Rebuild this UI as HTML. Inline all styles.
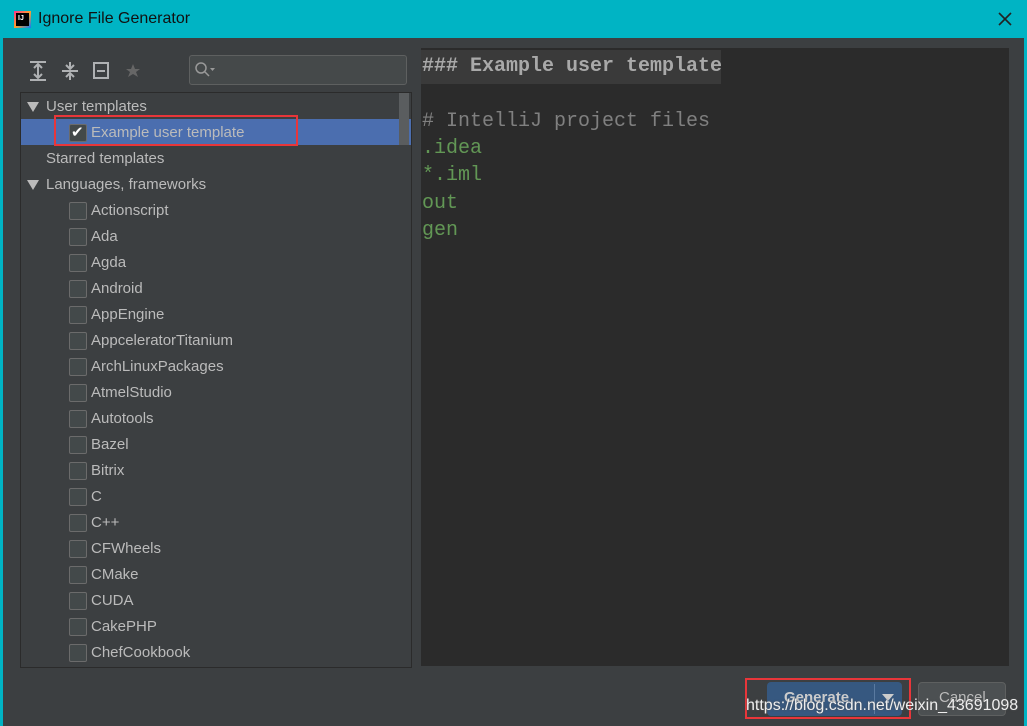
<!DOCTYPE html><html><head><style>
body{margin:0;width:1027px;height:726px;overflow:hidden;background:#3c3f41;font-family:"Liberation Sans",sans-serif;position:relative}
.a{position:absolute}
.row{position:absolute;left:0;height:26px;line-height:28px;font-size:15px;color:#bbbbbb;white-space:nowrap}
.cb{position:absolute;left:48px;top:5px;width:16px;height:16px;border:1px solid #6b6b6b;background:#43494a;border-radius:2px}
.tri{position:absolute;left:6px;top:9px;width:0;height:0;border-left:6px solid transparent;border-right:6px solid transparent;border-top:10px solid #bbb}
.mono{position:absolute;left:422px;font-family:"Liberation Mono",monospace;font-size:20px;line-height:27.3px;white-space:pre}
</style></head><body>
<div class="a" style="left:0;top:0;width:1027px;height:38px;background:#00b4c4"></div>
<div class="a" style="left:0;top:0;width:3px;height:726px;background:#00b4c4"></div>
<div class="a" style="left:1024px;top:0;width:3px;height:726px;background:#00b4c4"></div>
<div class="a" style="left:14px;top:11px;width:17px;height:17px;background:linear-gradient(135deg,#fc318c,#fe9f2b 50%,#087cfa)"></div>
<div class="a" style="left:16px;top:13px;width:13px;height:13px;background:#000"></div>
<div class="a" style="left:18px;top:15px;color:#fff;font-size:7px;font-weight:bold">IJ</div>
<div class="a" style="left:38px;top:10px;font-size:16px;color:#111">Ignore File Generator</div>
<svg class="a" style="left:998px;top:12px" width="14" height="14" stroke="#222" stroke-width="1.6"><path d="M1 1l12 12M13 1L1 13"/></svg>
<!-- toolbar -->
<svg class="a" style="left:28px;top:60px" width="120" height="22" fill="none" stroke="#afb1b3" stroke-width="2">
<path d="M2 2h16M2 20h16M10 5v12M6 8l4-4 4 4M6 14l4 4 4-4"/>
<path d="M34 11h16M42 2v6M38 5l4 4 4-4M42 20v-6M38 17l4-4 4 4"/>
<rect x="66" y="3" width="14" height="15"/><path d="M69 11h8"/>
<path d="M105 4l2 5h5l-4 3 2 5-5-3-5 3 2-5-4-3h5z" fill="#666" stroke="none"/>
</svg>
<div class="a" style="left:189px;top:55px;width:216px;height:28px;border:1px solid #5e6060;border-radius:3px;background:#45494a"></div>
<svg class="a" style="left:194px;top:61px" width="24" height="18" fill="none" stroke="#999" stroke-width="1.5"><circle cx="7" cy="7" r="5"/><path d="M11 11l4 4"/><path d="M16 7h5l-2.5 3z" fill="#999" stroke="none"/></svg>
<!-- tree -->
<div class="a" style="left:20px;top:92px;width:390px;height:574px;border:1px solid #2b2b2b;overflow:hidden">
<div class="a" style="left:0;top:26px;width:390px;height:26px;background:#4b6eaf"></div>
<div class="a" style="left:378px;top:0;width:10px;height:52px;background:#5a5d5f"></div>
<div class="row" style="top:0"><div class="tri"></div><span style="position:absolute;left:25px">User templates</span></div>
<div class="row" style="top:26px"><div class="cb" style="background:#43494a"></div><span style="position:absolute;left:50px;top:0;color:#fff;font-size:15px">✔</span><span style="position:absolute;left:70px">Example user template</span></div>
<div class="row" style="top:52px"><span style="position:absolute;left:25px">Starred templates</span></div>
<div class="row" style="top:78px"><div class="tri"></div><span style="position:absolute;left:25px">Languages, frameworks</span></div>
<div id="list"></div>
</div>
<div class="a" style="left:54px;top:115px;width:244px;height:31px;border:2px solid #e8363a;box-sizing:border-box"></div>
<!-- editor -->
<div class="a" style="left:421px;top:48px;width:588px;height:618px;background:#2b2b2b"></div>
<div class="a" style="left:421px;top:50px;width:300px;height:34px;background:#3a3a3a"></div>
<div class="mono" style="top:53px;color:#a9a9a9;font-weight:bold">### Example user template</div>
<div class="mono" style="top:108px;color:#808080"># IntelliJ project files</div>
<div class="mono" style="top:135px;color:#629755">.idea
*.iml
out
gen</div>
<!-- buttons -->
<div class="a" style="left:767px;top:682px;width:135px;height:34px;background:#365880;border-radius:4px"></div>
<div class="a" style="left:874px;top:684px;width:1px;height:30px;background:#5a7aa0"></div>
<div class="a" style="left:784px;top:689px;font-size:15px;font-weight:bold;color:#ccc">Generate</div>
<div class="a" style="left:882px;top:694px;width:0;height:0;border-left:6px solid transparent;border-right:6px solid transparent;border-top:7px solid #ccc"></div>
<div class="a" style="left:918px;top:682px;width:88px;height:34px;background:#4c5052;border:1px solid #5e6060;border-radius:4px;box-sizing:border-box"></div>
<div class="a" style="left:939px;top:689px;font-size:15px;color:#bbb">Cancel</div>
<div class="a" style="left:745px;top:678px;width:166px;height:41px;border:2px solid #e8363a;box-sizing:border-box"></div>
<div class="a" style="left:746px;top:697px;font-size:16px;color:#eee;text-shadow:0 0 2px #555">https://blog.csdn.net/weixin_43691098</div>
<script>
var n=["Actionscript","Ada","Agda","Android","AppEngine","AppceleratorTitanium","ArchLinuxPackages","AtmelStudio","Autotools","Bazel","Bitrix","C","C++","CFWheels","CMake","CUDA","CakePHP","ChefCookbook"];
var h="";n.forEach(function(t,i){h+='<div class="row" style="top:'+(104+i*26)+'px"><div class="cb"></div><span style="position:absolute;left:70px">'+t+'</span></div>'});
document.getElementById("list").outerHTML=h;
</script>
</body></html>
